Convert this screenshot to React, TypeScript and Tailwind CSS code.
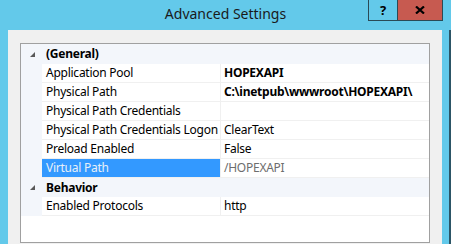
import React from "react";

type Row =
  | { kind: "cat"; label: string }
  | { kind: "prop"; label: string; value: string; bold?: boolean; selected?: boolean };

const rows: Row[] = [
  { kind: "cat", label: "(General)" },
  { kind: "prop", label: "Application Pool", value: "HOPEXAPI", bold: true },
  { kind: "prop", label: "Physical Path", value: "C:\\inetpub\\wwwroot\\HOPEXAPI\\", bold: true },
  { kind: "prop", label: "Physical Path Credentials", value: "" },
  { kind: "prop", label: "Physical Path Credentials Logon", value: "ClearText" },
  { kind: "prop", label: "Preload Enabled", value: "False" },
  { kind: "prop", label: "Virtual Path", value: "/HOPEXAPI", selected: true },
  { kind: "cat", label: "Behavior" },
  { kind: "prop", label: "Enabled Protocols", value: "http" },
];

function Triangle() {
  return (
    <svg width="7" height="7" viewBox="0 0 7 7" className="block">
      <path d="M6 1 L6 6 L1 6 Z" fill="#595959" />
    </svg>
  );
}

export default function App() {
  return (
    <div
      className="relative w-[451px] h-[244px] overflow-hidden bg-[#63c9ea] text-[12px] tracking-[-0.25px] text-black"
      style={{ fontFamily: '"Noto Sans", "Open Sans", sans-serif' }}
    >
      {/* Title bar */}
      <div className="relative h-[30px] flex items-center justify-center">
        <span className="text-[14px] tracking-normal text-[#1a1a1a] leading-none mt-[-2px]">Advanced Settings</span>
        <div className="absolute top-0 left-[368px] flex items-start">
          <div className="w-[29px] h-[21px] border-l border-b border-[#2a4a56] flex items-center justify-center font-bold text-[13px] leading-none">
            ?
          </div>
          <div className="w-[46px] h-[21px] bg-[#c75a50] border-x border-b border-[#2a4a56] flex items-center justify-center">
            <svg width="10" height="8" viewBox="0 0 10 8" className="block">
              <path d="M1 0.5 L9 7.5 M9 0.5 L1 7.5" stroke="#000" strokeWidth="2.2" />
            </svg>
          </div>
        </div>
      </div>
      {/* Body */}
      <div className="flex">
        <div className="ml-[8px] w-[434px] h-[214px] bg-[#f0f0f0] pt-[13px] px-[12px]">
          <div className="w-[410px] h-[200px] border border-[#a0a0a0] bg-white">
            {rows.map((r, i) =>
              r.kind === "cat" ? (
                <div
                  key={i}
                  className={`flex items-center bg-[#f3f6fb] ${i === 0 ? "h-[20px]" : "h-[19px]"}`}
                >
                  <div className="w-[21px] flex justify-end pr-[6px]">
                    <Triangle />
                  </div>
                  <span className="pl-[4px] font-bold">{r.label}</span>
                </div>
              ) : (
                <div key={i} className="flex h-[19px]">
                  <div className="w-[21px] bg-[#f3f6fb]" />
                  <div
                    className={`w-[174px] h-[18px] flex items-center pl-[4px] border-b border-[#f0f0f0] box-content ${
                      r.selected ? "bg-[#3399ff] text-[#e8f0f8]" : ""
                    }`}
                  >
                    <span className="whitespace-nowrap">{r.label}</span>
                  </div>
                  <div className="w-px bg-[#f0f0f0]" />
                  <div
                    className={`flex-1 h-[18px] flex items-center pl-[3px] border-b border-[#f0f0f0] box-content ${
                      r.bold ? "font-bold" : ""
                    } ${r.selected ? "text-[#6d6d6d]" : ""}`}
                  >
                    <span className="whitespace-nowrap">{r.value}</span>
                  </div>
                </div>
              )
            )}
          </div>
        </div>
        <div className="ml-auto w-[2px] h-[214px] bg-[#2c5566]" />
      </div>
    </div>
  );
}
